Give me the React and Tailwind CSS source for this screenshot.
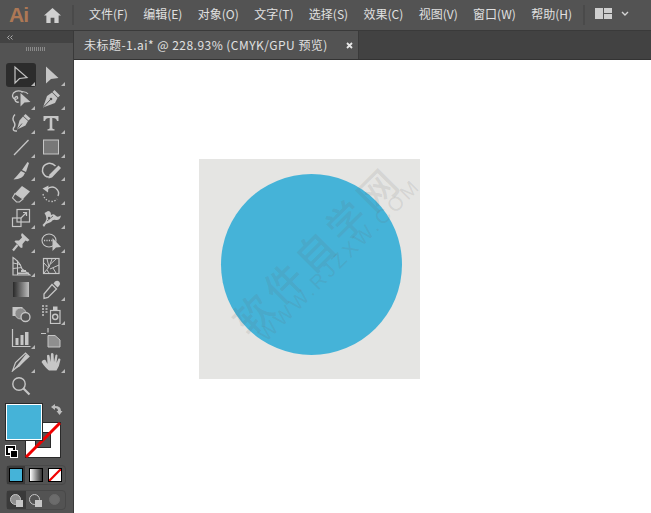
import React from 'react'

const C = '#c6c6c6'

// toolbar icons, all in a 20x20 box
const icons = {
  select: <path d="M4 2 L4 18 L8.5 13.5 L16 12.5 Z" fill="none" stroke={C} strokeWidth="1.2" />,
  direct: <path d="M5 1.5 L5 18.5 L10 14 L17.5 13 Z" fill={C} />,
  magic: (
    <>
      <path d="M12 3 Q6 0.5 2.5 4 Q0 8 4 10.5 Q8 10 6 7.5 Q3 8 4 11 Q5 14 8 13" fill="none" stroke={C} strokeWidth="1.3" />
      <path d="M10 3 Q15 2 17 5" fill="none" stroke={C} strokeWidth="1.2" />
      <path d="M9.5 4 L9.5 17.5 L13.5 13.5 L19.5 13 Z" fill={C} />
    </>
  ),
  pen: (
    <>
      <path d="M13.5 1 L19 6.5 L17 8.5 L11.5 3 Z" fill={C} />
      <path d="M11 3.5 L16.5 9 L14 14 L2 18.5 L6 7 Z" fill={C} />
      <path d="M2.5 18 L9.5 10.5" stroke="#535353" strokeWidth="1" />
      <circle cx="10" cy="10" r="1.3" fill="#535353" />
    </>
  ),
  curvature: (
    <>
      <path d="M14.5 1 L19.5 5.5 L17.5 7.5 L12.5 3 Z" fill={C} />
      <path d="M12 3.5 L17 8 L14.5 12.5 L6 16.5 L8.5 7.5 Z" fill={C} />
      <path d="M6.5 16 L11 10.5" stroke="#535353" strokeWidth="0.9" />
      <path d="M4 1.5 Q0.5 5 3 9 Q5 12 2.5 15 Q1.5 18.5 6 18" fill="none" stroke={C} strokeWidth="1.4" />
    </>
  ),
  type: <path d="M2.5 3 H17.5 V8 H16 Q15.5 5 12 5 H11.3 V15 Q11.3 16.3 13.5 16.3 V17.5 H6.5 V16.3 Q8.7 16.3 8.7 15 V5 H8 Q4.5 5 4 8 H2.5 Z" fill={C} />,
  line: <path d="M3 18 L17.5 3" stroke={C} strokeWidth="1.3" />,
  rect: <rect x="2.5" y="3" width="15" height="14" fill="#787878" stroke={C} strokeWidth="1" />,
  brush: (
    <>
      <path d="M16.5 1 L18 2 L15 11 L11 9 Z" fill={C} />
      <path d="M10 10 L14 12 Q12 18 2.5 18.5 Q6 15 10 10 Z" fill={C} />
    </>
  ),
  blob: (
    <>
      <path d="M14.5 5 Q11 1.5 7 2.5 Q1 4 1.5 10.5 Q3 16 8 16" fill="none" stroke={C} strokeWidth="1.5" />
      <path d="M17.5 4.5 L20 7 L11 16.5 L7.5 17.5 L8.5 13.5 Z" fill={C} />
    </>
  ),
  eraser: (
    <>
      <path d="M11 2 L19 7.5 L12 15 L4 9.5 Z" fill={C} />
      <path d="M4 9.5 L12 15 L8.5 18 L5.5 18 L1.5 14 Z" fill="#535353" stroke={C} strokeWidth="1.1" />
    </>
  ),
  rotate: (
    <>
      <path d="M5.5 5.5 Q10 1.5 14.5 4 Q19 7.5 17 12" fill="none" stroke={C} strokeWidth="1.4" />
      <path d="M1.5 4.5 L7.5 1.5 L7 8.5 Z" fill={C} />
      <path d="M2 10 Q3.5 16.5 10 17.5 Q13.5 17.5 16 15" fill="none" stroke={C} strokeWidth="1.3" strokeDasharray="1.4 1.6" />
    </>
  ),
  scale: (
    <>
      <rect x="1.5" y="10" width="8.5" height="8.5" fill="none" stroke={C} strokeWidth="1.2" />
      <rect x="6" y="1.5" width="12.5" height="12.5" fill="none" stroke={C} strokeWidth="1.2" />
      <path d="M10 10 L15.5 4.5 M12 4.5 H15.5 V8" fill="none" stroke={C} strokeWidth="1.2" />
    </>
  ),
  warp: (
    <>
      <path d="M1.5 17 Q5 14 5.5 11 Q5 7 3.5 5 L7 3 Q10 3 10 7 Q13 5 15 8 Q17 9.5 20 7.5 Q19 12.5 15 12 Q12 11 10 14 L5 16 L3 19 Z" fill={C} />
      <circle cx="8" cy="10" r="1.2" fill="#535353" />
      <path d="M6 13 L12 8" stroke="#535353" strokeWidth="0.8" />
    </>
  ),
  pin: (
    <>
      <path d="M11 1 L18.5 8 L16.5 9.5 L14.5 8.5 L11.5 12 L11.5 15.5 L10 16 L3.5 9.5 L4.5 8.5 L8 8.5 L11 5.5 L10 3 Z" fill={C} />
      <path d="M6.5 13 L2 18.5" stroke={C} strokeWidth="2.2" />
    </>
  ),
  shape: (
    <>
      <ellipse cx="8" cy="8.5" rx="7" ry="6.5" fill="none" stroke={C} strokeWidth="1.1" />
      <path d="M3 8.5 H12" stroke={C} strokeWidth="1.3" strokeDasharray="1.2 1.2" />
      <path d="M11.5 6 L11.5 19 L15 15.5 L20 15 Z" fill={C} />
    </>
  ),
  mesh: (
    <>
      <path d="M2 1.5 L2 19 H19 L11 13 Q9 6 2 1.5 Z" fill="none" stroke={C} strokeWidth="1.2" />
      <path d="M2 7 L9.5 8.5 M2 12.5 L11 11.5 M6.5 4.5 L6.5 19" stroke={C} strokeWidth="1" />
      <path d="M10 15 H15 M7 17.3 H18" stroke={C} strokeWidth="1.8" />
    </>
  ),
  web: (
    <>
      <rect x="2.5" y="2.5" width="15.5" height="15" fill="none" stroke={C} strokeWidth="1.2" />
      <path d="M3 17 Q9 12 11 3 M7.5 12 L3 7 M8 11 L6 3 M9.5 8 L15 3 M9 13 L18 9 M12 12 L15 17 M6 14 L8 17" fill="none" stroke={C} strokeWidth="1" />
    </>
  ),
  picker: (
    <>
      <path d="M14 1.5 Q16.5 0 18.5 2 Q20 4 18 6 L16.5 7.5 L12.5 3.5 Z" fill={C} />
      <path d="M11 4.5 L15.5 9 L7 17.5 L3 18.5 L3 14 Z" fill="none" stroke={C} strokeWidth="1.3" />
    </>
  ),
  symbol: (
    <>
      <rect x="1.5" y="3" width="10" height="9" fill={C} />
      <circle cx="9.5" cy="9.5" r="5.5" fill="#8a8a8a" stroke={C} strokeWidth="0.8" />
      <circle cx="14.5" cy="13" r="4.5" fill="#535353" stroke={C} strokeWidth="1.3" />
    </>
  ),
  spray: (
    <>
      <rect x="9.5" y="6.5" width="9.5" height="13" fill="none" stroke={C} strokeWidth="1.2" />
      <rect x="12" y="2.5" width="4.5" height="3.5" fill={C} />
      <circle cx="14.2" cy="12.8" r="2.6" fill="none" stroke={C} strokeWidth="1.5" />
      <path d="M1 5 H3 M4.5 5 H6.5 M1 8 H3 M4.5 8 H6.5 M1 2 H3 M4.5 2 H6.5 M1 11 H3" stroke={C} strokeWidth="1.4" />
    </>
  ),
  graph: (
    <>
      <path d="M1.5 1 V18.5 H19.5" fill="none" stroke={C} strokeWidth="1.2" />
      <path d="M4.5 10 H7.5 V17 H4.5 Z M9.5 7 H12.5 V17 H9.5 Z M14 4 H17.5 V17 H14 Z" fill={C} />
    </>
  ),
  artboard: (
    <>
      <path d="M7 7.5 H14 L19 12 V19 H7 Z" fill="#8f8f8f" stroke={C} strokeWidth="1" />
      <path d="M0 5.5 H5 M7 0 V4.5" stroke={C} strokeWidth="1.2" />
    </>
  ),
  slice: (
    <>
      <path d="M18 4.5 L14.5 1 L4.5 10.5 L1.5 19 Z" fill="none" stroke={C} strokeWidth="1.2" />
      <path d="M15 2 L18 4.5 L8.5 14.5 L2.5 18 Z" fill={C} />
    </>
  ),
  hand: <path d="M4.5 8 L6.5 12 L6 3.5 Q7 2 8.5 3.5 L9.5 10 L10 1.5 Q11.5 0.5 12.5 2 L13 10 L14.5 3 Q16 2 16.5 3.5 L15.5 11 L17.5 6.5 Q19 6 19.5 7.5 Q18.5 14 15.5 18.5 H8 Q4.5 16 0.5 10 Q2 7 4.5 8 Z" fill={C} />,
  zoom: (
    <>
      <circle cx="8" cy="8" r="6.2" fill="none" stroke={C} strokeWidth="1.4" />
      <path d="M12.5 12.5 L18.5 18.5" stroke={C} strokeWidth="2.2" />
    </>
  ),
}

const tools = [
  ['select', 'direct'],
  ['magic', 'pen'],
  ['curvature', 'type'],
  ['line', 'rect'],
  ['brush', 'blob'],
  ['eraser', 'rotate'],
  ['scale', 'warp'],
  ['pin', 'shape'],
  ['mesh', 'web'],
  ['gradient', 'picker'],
  ['symbol', 'spray'],
  ['graph', 'artboard'],
  ['slice', 'hand'],
  ['zoom', null],
]

const noCorner = ['gradient', 'web', 'symbol', 'artboard', 'zoom']

const menus = ['文件(F)', '编辑(E)', '对象(O)', '文字(T)', '选择(S)', '效果(C)', '视图(V)', '窗口(W)', '帮助(H)']

function Tool({ name }) {
  if (!name) return <div />
  const active = name === 'select'
  return (
    <div className={`relative flex items-center justify-center ${active ? 'rounded-[3px] bg-[#2c2c2c]' : ''}`}>
      {name === 'gradient' ? (
        <div className="w-[16px] h-[15px] bg-gradient-to-r from-[#2a2a2a] to-[#c0c0c0]" />
      ) : (
        <svg width="20" height="20" viewBox="0 0 20 20">{icons[name]}</svg>
      )}
      {!noCorner.includes(name) && (
        <div className="absolute right-[1px] bottom-[1px] w-0 h-0 border-[2px] border-l-transparent border-t-transparent border-r-[#b8b8b8] border-b-[#b8b8b8]" />
      )}
    </div>
  )
}

function NoneSwatch({ className }) {
  return (
    <svg className={className} viewBox="0 0 14 14" preserveAspectRatio="none">
      <rect width="14" height="14" fill="#fff" />
      <path d="M0 14 L14 0" stroke="#f00000" strokeWidth="2.6" />
    </svg>
  )
}

function Mode({ dim, ghost }) {
  return (
    <svg width="15" height="15" viewBox="0 0 15 15">
      <circle cx="6.5" cy="6.5" r="5" fill={dim ? 'none' : ghost ? '#6c6c6c' : '#8e8e8e'} stroke={ghost ? '#6a6a6a' : '#c6c6c6'} strokeWidth="1" />
      {!ghost && <rect x="7" y="7" width="7" height="7" fill="#c6c6c6" />}
    </svg>
  )
}

export default function App() {
  return (
    <div className="w-[651px] h-[513px] flex flex-col overflow-hidden bg-[#535353] text-[12px] text-[#e0e0e0] font-['Noto_Sans_CJK_SC','Noto_Sans',sans-serif]">
      {/* Menu bar */}
      <div className="h-[31px] shrink-0 flex items-center bg-[#535353] border-b border-[#3a3a3a]">
        <div className="w-[37px] pl-[9px] -mt-[2px] text-[21px] leading-none font-bold tracking-[-1px] text-[#ad7855] font-['Liberation_Sans',sans-serif]">Ai</div>
        <svg className="ml-[6px]" width="19" height="17" viewBox="0 0 20 18">
          <path d="M10 1 L19 9 L16.5 9 L16.5 17 L12 17 L12 11.5 L8 11.5 L8 17 L3.5 17 L3.5 9 L1 9 Z" fill="#d0d0d0" />
        </svg>
        <div className="ml-[10px] w-[2px] h-[20px] bg-[#4a4a4a]" />
        <div className="ml-[15px] -mt-[2px] flex gap-[15.4px] whitespace-nowrap">
          {menus.map((m) => (
            <span key={m}>{m}</span>
          ))}
        </div>
        <div className="ml-[11px] w-[2px] h-[20px] bg-[#4a4a4a]" />
        <div className="ml-[10px] flex gap-[1px] -mt-[3px]">
          <div className="w-[8px] h-[11px] bg-[#cfcfcf]" />
          <div className="flex flex-col gap-[1px]">
            <div className="w-[8px] h-[5px] bg-[#cfcfcf]" />
            <div className="w-[8px] h-[5px] bg-[#cfcfcf]" />
          </div>
        </div>
        <svg className="ml-[9px] -mt-[3px]" width="8" height="6" viewBox="0 0 8 6">
          <path d="M1 1 L4 4 L7 1" fill="none" stroke="#d4d4d4" strokeWidth="1.4" />
        </svg>
      </div>

      <div className="flex-1 flex min-h-0">
        {/* Tools panel */}
        <div className="w-[74px] shrink-0 flex flex-col border-r border-[#3a3a3a]">
          <div className="h-[12px] bg-[#434343] flex items-center pl-[7px]">
            <svg width="6" height="5" viewBox="0 0 6 5">
              <path d="M2.5 0.5 L0.5 2.5 L2.5 4.5 M5.5 0.5 L3.5 2.5 L5.5 4.5" fill="none" stroke="#b8b8b8" strokeWidth="0.9" />
            </svg>
          </div>
          <div className="mt-[4px] ml-[26px] w-[19px] h-[4px] bg-[repeating-linear-gradient(90deg,#8a8a8a_0,#8a8a8a_1px,transparent_1px,transparent_2px)]" />
          <div className="mt-[12px] ml-[6px] grid grid-cols-[30px_30px] auto-rows-[23.9px]">
            {tools.flat().map((name, i) => (
              <Tool key={i} name={name} />
            ))}
          </div>

          {/* Fill and stroke */}
          <div className="relative mt-[7px] ml-[6px] w-[56px] h-[54px]">
            <div className="absolute left-[19px] top-[18px] w-[36px] h-[36px] bg-white border border-[#2a2a2a] flex items-center justify-center">
              <div className="w-[16px] h-[16px] bg-[#535353] border border-[#2a2a2a]" />
            </div>
            <svg className="absolute left-[19px] top-[18px]" width="36" height="36" viewBox="0 0 36 36">
              <path d="M1 35 L35 1" stroke="#f00000" strokeWidth="3" />
            </svg>
            <div className="absolute left-0 top-0 w-[36px] h-[36px] bg-[#45b3d8] border border-white outline outline-[#2a2a2a]" />
            <svg className="absolute left-[44px] top-[-1px]" width="13" height="13" viewBox="0 0 13 13">
              <path d="M1 4 L5 1 L5 3 Q11 3 11 8 L12.5 8 L9.5 12 L6.5 8 L8 8 Q8 5 5 5 L5 7 Z" fill="#bdbdbd" />
            </svg>
            <div className="absolute left-[0px] top-[42px] w-[9px] h-[9px] bg-white border-2 border-black outline outline-white" />
            <div className="absolute left-[4px] top-[46px] w-[8px] h-[8px] bg-black border border-white" />
          </div>

          <div className="mt-[7px] ml-[6px] w-[60px] h-[20px] flex items-center border border-[#484848] rounded-sm">
            <div className="w-[19px] h-[18px] bg-[#3a3a3a] flex items-center justify-center">
              <div className="w-[14px] h-[14px] bg-[#45b3d8] border border-black" />
            </div>
            <div className="ml-[1px] w-[20px] flex items-center justify-center">
              <div className="w-[14px] h-[14px] border border-black bg-gradient-to-r from-white to-[#333333]" />
            </div>
            <div className="w-[20px] flex items-center justify-center">
              <div className="w-[14px] h-[14px] border border-black">
                <NoneSwatch className="w-full h-full block" />
              </div>
            </div>
          </div>

          <div className="mt-[5px] ml-[6px] w-[60px] h-[20px] flex items-center border border-[#484848] rounded-sm">
            <div className="w-[20px] h-[18px] bg-[#3a3a3a] flex items-center justify-center">
              <Mode />
            </div>
            <div className="w-[20px] flex items-center justify-center">
              <Mode dim />
            </div>
            <div className="w-[20px] flex items-center justify-center">
              <Mode ghost />
            </div>
          </div>
        </div>

        <div className="flex-1 flex flex-col min-w-0">
          {/* Document tab bar */}
          <div className="h-[29px] shrink-0 flex bg-[#424242] border-b border-[#333333]">
            <div className="w-[285px] flex items-center bg-[#535353] border-r border-[#3a3a3a] pl-[10px] whitespace-nowrap">
              <span className="tracking-[0.47px]">未标题-1.ai* @ 228.93% (CMYK/GPU 预览)</span>
              <svg className="ml-[18px]" width="7" height="7" viewBox="0 0 7 7">
                <path d="M1 1 L6 6 M6 1 L1 6" stroke="#e8e8e8" strokeWidth="1.8" />
              </svg>
            </div>
          </div>

          {/* Canvas */}
          <div className="flex-1 bg-white pl-[125px] pt-[99px]">
            <div className="relative w-[221px] h-[220px] bg-[#e5e5e3] pl-[22px] pt-[15px] overflow-visible">
              <div className="w-[181px] h-[181px] rounded-full bg-[#45b3d8]" />
              <div className="absolute left-[7px] top-[71px] w-[220px] -rotate-45 text-center text-[38px] font-medium leading-none whitespace-nowrap tracking-[6px] text-[#6a6a6a24]">软件自学网</div>
              <div className="absolute left-[31px] top-[93px] w-[214px] -rotate-45 text-center text-[20px] leading-none whitespace-nowrap tracking-[3px] text-[#6a6a6a24] font-['Liberation_Sans',sans-serif]">WWW.RJZXW.COM</div>
            </div>
          </div>
        </div>
      </div>
    </div>
  )
}
